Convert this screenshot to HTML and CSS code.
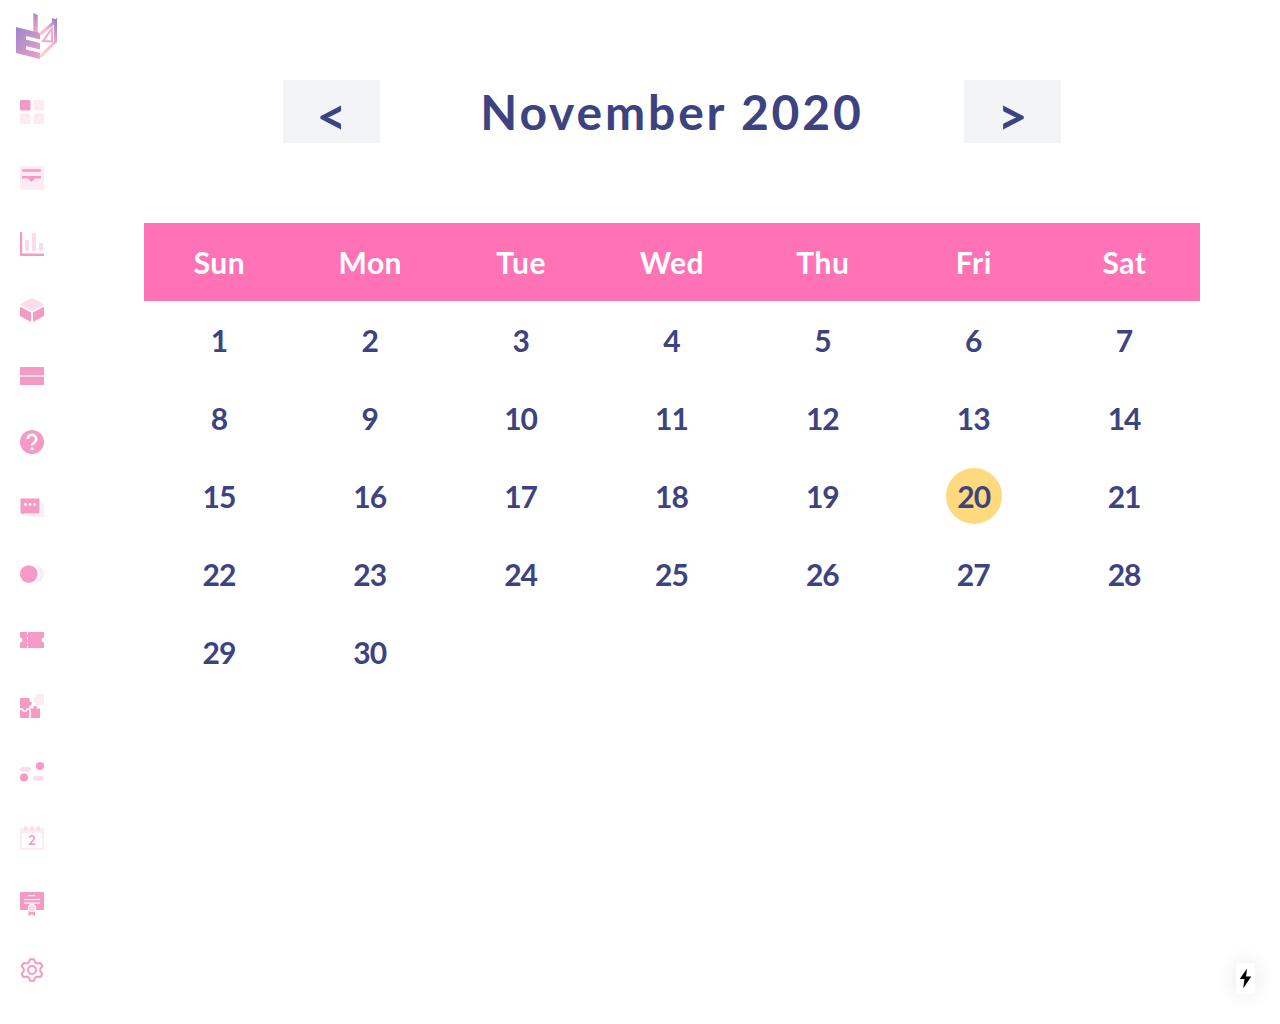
FILE: index.html
```html
<!DOCTYPE html>
<html lang="en">
<head>
    <meta charset="UTF-8">
    <meta name="viewport" content="width=device-width, initial-scale=1.0">
    <link rel="stylesheet" href="styles.css">
    <title>Calendar</title>
</head>
<body>
    <div class="sidebar">
        <svg class="logo" width="41" height="46" viewBox="16 13 41 46">
            <defs>
                <linearGradient id="logo-left" x1="0" y1="0" x2="1" y2="1">
                    <stop offset="0" stop-color="#9d86c8"/>
                    <stop offset="1" stop-color="#ee9fc8"/>
                </linearGradient>
                <linearGradient id="logo-right" x1="0" y1="1" x2="1" y2="0">
                    <stop offset="0" stop-color="#fdd8c0"/>
                    <stop offset="0.6" stop-color="#f8b6d2"/>
                    <stop offset="1" stop-color="#9d86c8"/>
                </linearGradient>
                <linearGradient id="logo-bar" x1="0" y1="0" x2="0" y2="1">
                    <stop offset="0" stop-color="#a88cc9"/>
                    <stop offset="1" stop-color="#f3a9cc"/>
                </linearGradient>
            </defs>
            <polygon points="33.300,13 37.700,15 37.700,34 33.300,32.500" fill="url(#logo-bar)"/>
            <polygon points="16,27 40,33 40,59 16,53" fill="url(#logo-left)"/>
            <polygon points="26,36 40,39.500 40,43 26,39.500" fill="#fff"/>
            <polygon points="26,46 40,49.500 40,53 26,49.500" fill="#fff"/>
            <polygon points="52,18 57,20 57,24 52,22" fill="#9d86c8"/>
            <path d="M40 34.500 L55.500 21 V41.500 L40 57" fill="none" stroke="url(#logo-right)" stroke-width="3"/>
            <path d="M43 41 L52 28.500 V41.500 Z" fill="none" stroke="#f3a9cc" stroke-width="2"/>
        </svg>

        <svg class="icon" viewBox="0 0 24 24">
            <rect class="dark" width="10.500" height="10.500" rx="1.500"/>
            <rect class="soft" x="13.500" width="10.500" height="10.500" rx="1.500"/>
            <rect class="soft" y="13.500" width="10.500" height="10.500" rx="1.500"/>
            <rect class="soft" x="13.500" y="13.500" width="10.500" height="10.500" rx="1.500"/>
        </svg>
        <svg class="icon" viewBox="0 0 24 24">
            <rect class="soft" width="24" height="24" rx="2.500"/>
            <rect class="dark" x="2" y="3.300" width="19" height="2.500" rx="1"/>
            <path class="dark" d="M2 10h19v2.500h-6l-3.500 3.500-3.500-3.500h-6z"/>
        </svg>
        <svg class="icon" viewBox="0 0 24 24">
            <path class="dark" d="M0 0h2.200v21.500h21.800v2.500h-23a1 1 0 0 1-1-1z"/>
            <rect class="pale" x="5" y="8" width="4" height="11" rx="1"/>
            <rect class="pale" x="12" y="1" width="4" height="18" rx="1"/>
            <rect class="pale" x="19" y="11" width="4" height="8" rx="1"/>
        </svg>
        <svg class="icon" viewBox="0 0 24 24">
            <polygon class="pale" points="12,0 24,6.500 12,13 0,6.500"/>
            <polygon class="dark" points="0,8.500 11,14.500 11,24 0,18"/>
            <polygon class="dark" points="24,8.500 13,14.500 13,24 24,18"/>
        </svg>
        <svg class="icon" viewBox="0 0 24 24">
            <rect class="dark" y="3" width="24" height="8"/>
            <rect class="pale" y="11" width="24" height="2"/>
            <rect class="dark" y="13" width="24" height="8"/>
        </svg>
        <svg class="icon" viewBox="0 0 24 24">
            <circle class="dark" cx="12" cy="12" r="12"/>
            <path class="white-line" d="M7.800 9a4.200 4.200 0 1 1 6.800 3.300c-1.400 1-2.600 1.600-2.600 3.200"/>
            <circle class="white" cx="12" cy="18.700" r="1.500"/>
        </svg>
        <svg class="icon" viewBox="0 0 24 24">
            <path class="soft" d="M8 7h16v13a1 1 0 0 1-1 1h-15z"/>
            <path class="dark bubble" d="M1.500 2h17a1.500 1.500 0 0 1 1.500 1.500v13a1.500 1.500 0 0 1-1.500 1.500h-14l-2.500 1.500v-1.500a2 2 0 0 1-2-1.500v-13a1.500 1.500 0 0 1 1.500-1.500z"/>
            <circle class="white" cx="5.500" cy="8.500" r="1.400"/>
            <circle class="white" cx="10" cy="8.500" r="1.400"/>
            <circle class="white" cx="14.500" cy="8.500" r="1.400"/>
        </svg>
        <svg class="icon" viewBox="0 0 24 24">
            <circle class="soft" cx="15" cy="12" r="9"/>
            <circle class="white" cx="11" cy="12" r="9.400"/>
            <circle class="dark" cx="8.800" cy="12" r="8.800"/>
        </svg>
        <svg class="icon" viewBox="0 0 24 24">
            <rect class="dark" y="4" width="24" height="16"/>
            <circle class="white" cx="0" cy="12" r="2.500"/>
            <circle class="white" cx="24" cy="12" r="2.500"/>
            <rect class="white" x="7" y="4" width="1" height="3"/>
            <rect class="white" x="7" y="9" width="1" height="2.500"/>
            <rect class="white" x="7" y="13.500" width="1" height="2.500"/>
            <rect class="white" x="7" y="18" width="1" height="2"/>
        </svg>
        <svg class="icon" viewBox="0 0 24 24">
            <path class="soft" d="M14 3h2.500a2 2 0 0 1 2.500-3h5v11h-8.500a2 2 0 0 0-1.500-2.500z"/>
            <rect class="dark" y="4" width="9.500" height="20"/>
            <rect class="dark" x="9.500" y="14.500" width="10.500" height="9.500"/>
            <circle class="dark" cx="10" cy="9.500" r="2"/>
            <circle class="dark" cx="15" cy="13.500" r="1.800"/>
            <path class="white-seam" d="M0 15h2.500a2.200 2.200 0 0 0 4.500 0h3M10 15v3a2 2 0 0 1 0 3v3"/>
        </svg>
        <svg class="icon" viewBox="0 0 24 24">
            <rect class="pale" y="7" width="11" height="4.500" rx="2.250"/>
            <circle class="dark" cx="20" cy="6" r="4"/>
            <circle class="dark" cx="4" cy="17.500" r="4"/>
            <rect class="pale" x="13" y="16" width="11" height="4.500" rx="2.250"/>
        </svg>
        <svg class="icon" viewBox="0 0 24 24">
            <rect class="soft" y="2" width="24" height="22" rx="2"/>
            <rect class="white" x="2" y="7" width="20" height="15"/>
            <rect class="pale" x="4" y="0" width="3" height="5" rx="1.500"/>
            <rect class="pale" x="10.500" y="0" width="3" height="5" rx="1.500"/>
            <rect class="pale" x="17" y="0" width="3" height="5" rx="1.500"/>
            <text class="icon-num" x="12" y="19">2</text>
        </svg>
        <svg class="icon" viewBox="0 0 24 24">
            <rect class="dark" width="24" height="18"/>
            <rect class="white" x="8" y="3" width="7" height="1.200"/>
            <rect class="white" x="4" y="7" width="16" height="1.200"/>
            <rect class="white" x="4" y="10.500" width="16" height="1.200"/>
            <path class="dark" d="M8.500 17h6.500v7l-3.200-1.800-3.300 1.800z"/>
            <circle class="white" cx="12" cy="16" r="4.300"/>
            <circle class="pale" cx="12" cy="16" r="3.300"/>
        </svg>
        <svg class="icon" viewBox="0 0 24 24">
            <polygon class="gear" points="10.100,1.170 13.900,1.170 15.100,4.300 17.110,5.460 20.430,4.930 22.340,8.240 20.220,10.840 20.220,13.160 22.340,15.760 20.430,19.070 17.110,18.540 15.100,19.700 13.900,22.830 10.100,22.830 8.900,19.700 6.890,18.540 3.570,19.070 1.660,15.760 3.780,13.160 3.780,10.840 1.660,8.240 3.570,4.930 6.890,5.460 8.900,4.300"/>
            <circle class="gear" cx="12" cy="12" r="4"/>
        </svg>
    </div>

    <div class="main">
        <div class="month-nav">
            <button class="nav-button">&lt;</button>
            <h1 class="month-title">November 2020</h1>
            <button class="nav-button">&gt;</button>
        </div>

        <div class="calendar">
            <div class="weekdays">
                <div class="weekday">Sun</div>
                <div class="weekday">Mon</div>
                <div class="weekday">Tue</div>
                <div class="weekday">Wed</div>
                <div class="weekday">Thu</div>
                <div class="weekday">Fri</div>
                <div class="weekday">Sat</div>
            </div>
            <div class="days">
                <div class="day">1</div>
                <div class="day">2</div>
                <div class="day">3</div>
                <div class="day">4</div>
                <div class="day">5</div>
                <div class="day">6</div>
                <div class="day">7</div>
                <div class="day">8</div>
                <div class="day">9</div>
                <div class="day">10</div>
                <div class="day">11</div>
                <div class="day">12</div>
                <div class="day">13</div>
                <div class="day">14</div>
                <div class="day">15</div>
                <div class="day">16</div>
                <div class="day">17</div>
                <div class="day">18</div>
                <div class="day">19</div>
                <div class="day"><span class="today">20</span></div>
                <div class="day">21</div>
                <div class="day">22</div>
                <div class="day">23</div>
                <div class="day">24</div>
                <div class="day">25</div>
                <div class="day">26</div>
                <div class="day">27</div>
                <div class="day">28</div>
                <div class="day">29</div>
                <div class="day">30</div>
            </div>
        </div>
    </div>

    <div class="bolt-badge">
        <svg width="13" height="21" viewBox="0 0 12 20">
            <path d="M7.500 0.500L0.500 10.500H5L3.800 19.500L11.500 8H6.500z" fill="#000"/>
        </svg>
    </div>
</body>
</html>
```
FILE: styles.css
```css
body {
    margin: 0;
    display: flex;
    min-height: 100vh;
    background-color: #fff;
    font-family: "Lato", sans-serif;
    color: #3c4380;
}

.sidebar {
    width: 64px;
    flex-shrink: 0;
    display: flex;
    flex-direction: column;
    align-items: center;
    padding-top: 13px;
    box-sizing: border-box;
}

.logo {
    margin-left: 9px;
    margin-bottom: 41px;
}

.icon {
    width: 24px;
    height: 24px;
    margin-bottom: 42px;
    flex-shrink: 0;
}

.dark { fill: #f49ac3; }
.pale { fill: #fbdcea; }
.soft { fill: #fdebf3; }
.white { fill: #fff; }

.bubble {
    stroke: #fff;
    stroke-width: 1;
}

.white-line {
    fill: none;
    stroke: #fff;
    stroke-width: 2.6;
}

.white-seam {
    fill: none;
    stroke: #fff;
    stroke-width: 1.4;
}

.gear {
    fill: none;
    stroke: #f49ac3;
    stroke-width: 2;
    stroke-linejoin: round;
}

.icon-num {
    fill: #f49ac3;
    font-size: 13px;
    font-weight: 700;
    text-anchor: middle;
}

.main {
    flex: 1;
    padding: 80px;
}

.month-nav {
    display: flex;
    justify-content: center;
    align-items: center;
    margin-bottom: 80px;
}

.nav-button {
    width: 97px;
    height: 63px;
    padding: 8px 0 0;
    border: none;
    background-color: #f3f4f6;
    color: #3c4380;
    font-family: "Lato", sans-serif;
    font-size: 52px;
    font-weight: 700;
    line-height: 55px;
}

.month-title {
    width: 584px;
    margin: 0;
    text-align: center;
    font-size: 48px;
    font-weight: 700;
    letter-spacing: 2.85px;
}

.weekdays {
    display: grid;
    grid-template-columns: repeat(7, 1fr);
    height: 78px;
    background-color: #ff72b6;
    color: #fff;
}

.weekday {
    display: flex;
    align-items: center;
    justify-content: center;
    font-size: 30px;
    font-weight: 700;
    letter-spacing: 0.5px;
}

.days {
    display: grid;
    grid-template-columns: repeat(7, 1fr);
    grid-auto-rows: 78px;
}

.day {
    display: flex;
    align-items: center;
    justify-content: center;
    padding-right: 1px;
    font-size: 30px;
    font-weight: 700;
    letter-spacing: -1px;
}

.today {
    display: flex;
    align-items: center;
    justify-content: center;
    flex-shrink: 0;
    width: 56px;
    height: 56px;
    margin-right: -1px;
    border-radius: 50%;
    background-color: #ffd97d;
}

.bolt-badge {
    position: fixed;
    left: 1236px;
    top: 963px;
    width: 19px;
    height: 31px;
    display: flex;
    align-items: center;
    justify-content: center;
    background-color: #fff;
    border-radius: 3px;
    box-shadow: 0 0 20px rgba(0, 0, 0, 0.1);
}
```
